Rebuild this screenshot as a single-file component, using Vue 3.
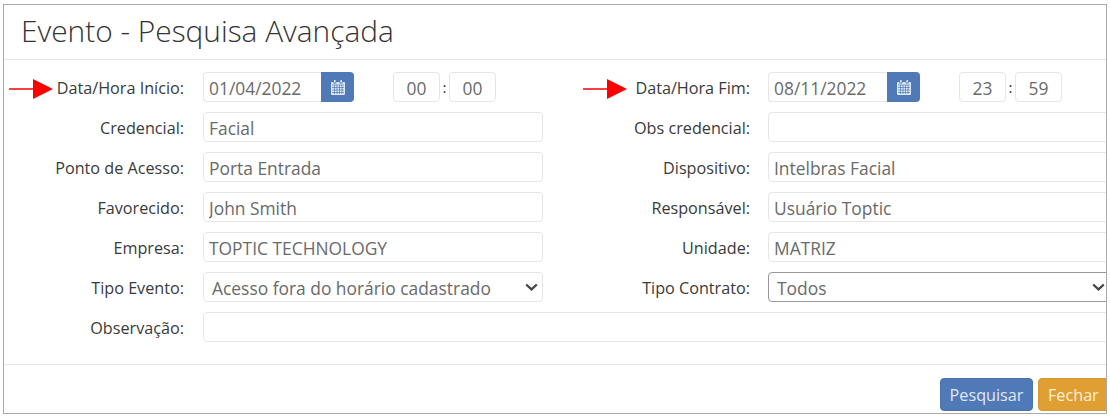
<script setup>
const rows = [
  { left: ['Credencial:', 'Facial'], right: ['Obs credencial:', ''] },
  { left: ['Ponto de Acesso:', 'Porta Entrada'], right: ['Dispositivo:', 'Intelbras Facial'] },
  { left: ['Favorecido:', 'John Smith'], right: ['Responsável:', 'Usuário Toptic'] },
  { left: ['Empresa:', 'TOPTIC TECHNOLOGY'], right: ['Unidade:', 'MATRIZ'] },
]
</script>

<template>
  <div class="page">
    <section class="card">
      <header class="head"><h1>Evento - Pesquisa Avançada</h1></header>
      <div class="body">
        <svg class="arrow arrow-a" width="44" height="20" viewBox="0 0 44 20"><path d="M0 9.2h24v1.6H0z M24 0l20 10-20 10z" fill="#f00" /></svg>
        <svg class="arrow arrow-b" width="44" height="20" viewBox="0 0 44 20"><path d="M0 9.2h24v1.6H0z M24 0l20 10-20 10z" fill="#f00" /></svg>

        <div class="row">
          <div class="left">
            <label>Data/Hora Início:</label>
            <div class="when">
              <div class="date"><input value="01/04/2022" /><button class="cal"><svg width="14" height="15" viewBox="0 0 14 15"><path fill="#dfe8f5" d="M3 0h1.6v2.6H3zM9.4 0H11v2.6H9.4zM1 2h1.4v1.4h3V2h3.2v1.4h3V2H13a1 1 0 0 1 1 1v11a1 1 0 0 1-1 1H1a1 1 0 0 1-1-1V3a1 1 0 0 1 1-1z"/><path stroke="#4f79b7" stroke-width=".7" fill="none" d="M1 5h12M1 7.5h12M1 10h12M1 12.5h12M3.5 5v9M6 5v9M8.5 5v9M11 5v9"/></svg></button></div>
              <div class="time"><input value="00" /><span>:</span><input value="00" /></div>
            </div>
          </div>
          <div class="right">
            <label>Data/Hora Fim:</label>
            <div class="when">
              <div class="date"><input value="08/11/2022" /><button class="cal"><svg width="14" height="15" viewBox="0 0 14 15"><path fill="#dfe8f5" d="M3 0h1.6v2.6H3zM9.4 0H11v2.6H9.4zM1 2h1.4v1.4h3V2h3.2v1.4h3V2H13a1 1 0 0 1 1 1v11a1 1 0 0 1-1 1H1a1 1 0 0 1-1-1V3a1 1 0 0 1 1-1z"/><path stroke="#4f79b7" stroke-width=".7" fill="none" d="M1 5h12M1 7.5h12M1 10h12M1 12.5h12M3.5 5v9M6 5v9M8.5 5v9M11 5v9"/></svg></button></div>
              <div class="time"><input value="23" /><span>:</span><input value="59" /></div>
            </div>
          </div>
        </div>

        <div v-for="r in rows" :key="r.left[0]" class="row">
          <div class="left"><label>{{ r.left[0] }}</label><input class="field" :value="r.left[1]" /></div>
          <div class="right"><label>{{ r.right[0] }}</label><input class="field" :value="r.right[1]" /></div>
        </div>

        <div class="row">
          <div class="left">
            <label>Tipo Evento:</label>
            <select class="field"><option>Acesso fora do horário cadastrado</option></select>
          </div>
          <div class="right">
            <label>Tipo Contrato:</label>
            <select class="field dark"><option>Todos</option></select>
          </div>
        </div>

        <div class="row">
          <div class="left wide">
            <label>Observação:</label>
            <input class="field" />
          </div>
        </div>
      </div>
      <footer class="foot">
        <button class="btn blue">Pesquisar</button>
        <button class="btn orange">Fechar</button>
      </footer>
    </section>
  </div>
</template>

<style>
html, body { margin: 0; background: #fff; }
</style>

<style scoped>
.page { width: 1110px; height: 418px; padding: 4px 3px; box-sizing: border-box; overflow: hidden; font-family: "Open Sans", sans-serif; }
.card { width: 1104px; height: 410px; box-sizing: border-box; border: 1px solid #aaa; overflow: hidden; display: flex; flex-direction: column; background: #fff; }
.head { height: 55px; box-sizing: border-box; border-bottom: 1px solid #e5e5e5; padding: 0 17px 2px; display: flex; align-items: center; flex: none; }
h1 { margin: 0; font-size: 29.85px; font-weight: 300; color: #333; white-space: nowrap; line-height: 1.1; }
.body { position: relative; padding: 12px 0 0; display: flex; flex-direction: column; gap: 10px; height: 304px; box-sizing: border-box; flex: none; }
.row { display: flex; height: 30px; width: 1400px; }
.left { width: 566px; display: flex; align-items: center; flex: none; }
.right { display: flex; align-items: center; flex: none; width: 600px; }
.wide { width: 1400px; }
label { flex: none; text-align: right; font-size: 16.2px; color: #3a3a3a; white-space: nowrap; padding-top: 1px; }
.left > label { width: 180px; margin-right: 19px; }
.right > label { width: 180px; margin-right: 18px; }
input, select { font-family: inherit; font-size: 17.4px; color: #6a6a6a; box-sizing: border-box; height: 30px; border: 1px solid #e6e6e6; background: #fff; border-radius: 4px; padding: 2px 5px 0; outline: none; margin: 0; }
.field { width: 340px; flex: none; }
.right > .field { width: 342px; }
.wide > .field { width: 1000px; }
select.field { padding: 2px 8px 0; appearance: none; background: #fff url("data:image/svg+xml,%3Csvg xmlns='http://www.w3.org/2000/svg' width='13' height='8' viewBox='0 0 13 8'%3E%3Cpath d='M1.2 1.5 6.5 6.4l5.3-4.9' fill='none' stroke='%23444' stroke-width='2.2'/%3E%3C/svg%3E") no-repeat right 4px center; }
select.dark { border-color: #999; }
.when { display: flex; align-items: center; }
.date { display: flex; width: 152px; }
.date input { width: 119px; border-radius: 4px 0 0 4px; border-right: 0; }
.left .date { width: 151px; }
.left .date input { width: 118px; }
.cal { width: 33px; height: 30px; border: 0; padding: 0; background: #4f79b7; border-radius: 0 4px 4px 0; display: flex; align-items: center; justify-content: center; }
.time { display: flex; align-items: center; margin-left: 39px; }
.time input { width: 47px; text-align: center; padding: 2px 0 0; }
.time span { width: 9px; text-align: center; font-size: 15px; color: #333; }
.arrow { position: absolute; }
.arrow-a { left: 5px; top: 19px; }
.arrow-b { left: 579px; top: 19px; }
.foot { border-top: 1px solid #e5e5e5; flex: 1; display: flex; justify-content: flex-end; align-items: flex-start; gap: 5px; padding: 13px 0 0 0; width: 1171px; box-sizing: border-box; }
.btn { height: 33px; border-radius: 4px; font-family: inherit; font-size: 16.2px; color: #e1e8f3; padding: 0; flex: none; }
.blue { width: 93px; background: #4f79b7; border: 1px solid #4a73ad; }
.orange { width: 137px; background: #e09f32; border: 1px solid #d9972c; color: #fbefdc; text-align: left; padding-left: 9px; }
</style>
